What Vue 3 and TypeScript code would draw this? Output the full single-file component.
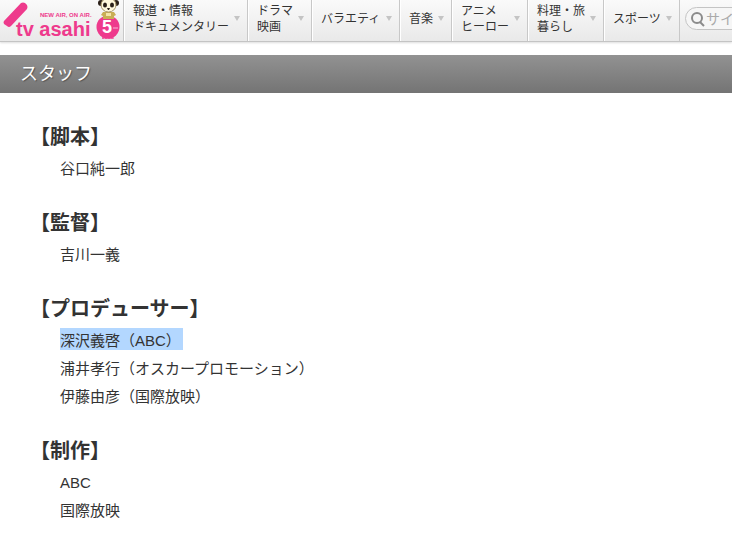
<script setup lang="ts">
import { ref } from 'vue'

interface NavItem {
  lines: string[]
  size: string
}

interface Section {
  title: string
  names: string[]
}

const navItems: NavItem[] = [
  { lines: ['報道・情報', 'ドキュメンタリー'], size: 'w124' },
  { lines: ['ドラマ', '映画'], size: 'w64' },
  { lines: ['バラエティ'], size: 'w88' },
  { lines: ['音楽'], size: 'w52' },
  { lines: ['アニメ', 'ヒーロー'], size: 'w76' },
  { lines: ['料理・旅', '暮らし'], size: 'w76' },
  { lines: ['スポーツ'], size: 'w76' },
]

const sections: Section[] = [
  { title: '【脚本】', names: ['谷口純一郎'] },
  { title: '【監督】', names: ['吉川一義'] },
  { title: '【プロデューサー】', names: ['深沢義啓（ABC）', '浦井孝行（オスカープロモーション）', '伊藤由彦（国際放映）'] },
  { title: '【制作】', names: ['ABC', '国際放映'] },
]

const highlighted = '深沢義啓（ABC）'
const query = ref('')
</script>

<template>
  <div class="page">
    <header class="header">
      <a class="logo" href="#" aria-label="tv asahi">
        <svg width="123" height="41" viewBox="0 0 123 41">
          <path d="M4 21 L21 3 Q23 2 25 3 L27 5 Q28 7 27 9 L11 26 Q9 28 7 26 L4 24 Q3 22 4 21Z" fill="#ee3a8c" />
          <text class="tagline" x="40" y="17">NEW AIR, ON AIR.</text>
          <text class="brand" x="16" y="36">tv asahi</text>
          <circle cx="108" cy="27" r="11.500" fill="#ee3a8c" />
          <text class="five" x="102" y="33">5</text>
          <path d="M113 28h5" stroke="#f9b4d4" stroke-width="1" />
          <path d="M103 36v3M106 36v3M109 36v3M112 36v3M102 38h12" stroke="#ee3a8c" stroke-width="1" />
          <circle cx="101" cy="3" r="3" fill="#2b2019" />
          <circle cx="116" cy="3" r="3" fill="#2b2019" />
          <path d="M103 12h11l2 3-2 1v3h-11v-3l-2-1z" fill="#c9ae55" />
          <path d="M106 13h5v3h-5z" fill="#f4e6a8" />
          <ellipse cx="108.500" cy="5" rx="7.500" ry="7" fill="#fff8dc" stroke="#a8966a" stroke-width="1" />
          <ellipse cx="105" cy="5" rx="2" ry="2.500" fill="#2b2019" />
          <ellipse cx="112" cy="5" rx="2" ry="2.500" fill="#2b2019" />
          <path d="M107 8h3l-1 2h-1z" fill="#2b2019" />
        </svg>
      </a>
      <nav class="nav">
        <a v-for="item in navItems" :key="item.lines[0]" class="nav-item" :class="item.size" href="#">
          <span class="nav-text">
            <span v-for="line in item.lines" :key="line" class="nav-line">{{ line }}</span>
          </span>
          <span class="arrow"></span>
        </a>
      </nav>
      <form class="search" @submit.prevent>
        <label class="search-box">
          <svg width="16" height="16" viewBox="0 0 16 16" fill="none" stroke="#8b8b8b" stroke-width="2">
            <circle cx="7" cy="7" r="5" />
            <path d="M10 11l4 4" />
          </svg>
          <input v-model="query" type="search" placeholder="サイト内検索" aria-label="サイト内検索" />
        </label>
      </form>
    </header>
    <main>
      <h1 class="title">スタッフ</h1>
      <div class="staff">
        <section v-for="section in sections" :key="section.title" class="section">
          <h2>{{ section.title }}</h2>
          <ul>
            <li v-for="name in section.names" :key="name">
              <mark v-if="name === highlighted">{{ name }}</mark>
              <template v-else>{{ name }}</template>
            </li>
          </ul>
        </section>
      </div>
    </main>
  </div>
</template>

<style>
body {
  margin: 0;
  background: #fff;
}
</style>

<style scoped>
.page {
  overflow: hidden;
  color: #333;
  font-family: "Liberation Sans", "Noto Sans CJK JP", sans-serif;
}
.header {
  display: flex;
  height: 41px;
  overflow: hidden;
  border-bottom: 1px solid #c4c4c4;
  background: linear-gradient(#fafafa, #e9e9e9);
  box-shadow: 0 1px 2px #ddd;
}
.logo {
  flex: none;
  width: 123px;
}
.logo svg {
  display: block;
}
.brand {
  fill: #ee3a8c;
  font-size: 20px;
  font-weight: bold;
}
.tagline {
  fill: #ee3a8c;
  font-size: 6px;
  font-weight: bold;
}
.five {
  fill: #fff;
  font-size: 18px;
  font-weight: bold;
}
.nav {
  display: flex;
  flex: none;
}
.nav-item {
  box-sizing: border-box;
  display: flex;
  align-items: center;
  justify-content: space-between;
  padding: 0 7px 4px 9px;
  border-left: 1px solid #c8c8c8;
  box-shadow: inset 1px 0 #fff;
  color: #333;
  font-size: 12px;
  line-height: 16px;
  text-decoration: none;
  white-space: nowrap;
}
.w124 { width: 124px; }
.w64 { width: 64px; }
.w88 { width: 88px; }
.w52 { width: 52px; }
.w76 { width: 76px; }
.nav-line {
  display: block;
}
.arrow {
  border: 3px solid transparent;
  border-top: 5px solid #c4c4c4;
  border-bottom: 0;
}
.search {
  flex: 1;
  min-width: 0;
  padding: 7px 0 0 5px;
  border-left: 1px solid #c8c8c8;
}
.search-box {
  box-sizing: border-box;
  display: flex;
  align-items: center;
  width: 180px;
  height: 23px;
  padding-left: 4px;
  border: 1px solid #c4c4c4;
  border-radius: 12px;
  background: #f6f6f6;
}
.search-box svg {
  flex: none;
}
.search-box input {
  min-width: 0;
  padding: 0;
  border: 0;
  outline: 0;
  background: transparent;
  color: #333;
  font: 14px "Liberation Sans", "Noto Sans CJK JP", sans-serif;
}
.search-box input::placeholder {
  color: #aaa;
}
.title {
  margin: 13px 0 0;
  padding: 0 20px;
  background: linear-gradient(#929292, #747474);
  color: #fff;
  font-size: 18px;
  font-weight: normal;
  line-height: 38px;
  text-shadow: 1px 1px 1px #555;
}
.staff {
  padding: 26px 30px 0;
}
.section {
  margin-bottom: 22px;
}
.section:last-child {
  margin-bottom: 0;
}
h2 {
  margin: 0;
  font-size: 20px;
  line-height: 36px;
}
ul {
  margin: 0;
  padding: 0 0 0 30px;
  list-style: none;
}
li {
  font-size: 15px;
  line-height: 28px;
}
mark {
  padding: 4px 2px 1px 0;
  background: #b3d7ff;
  color: inherit;
}
</style>
